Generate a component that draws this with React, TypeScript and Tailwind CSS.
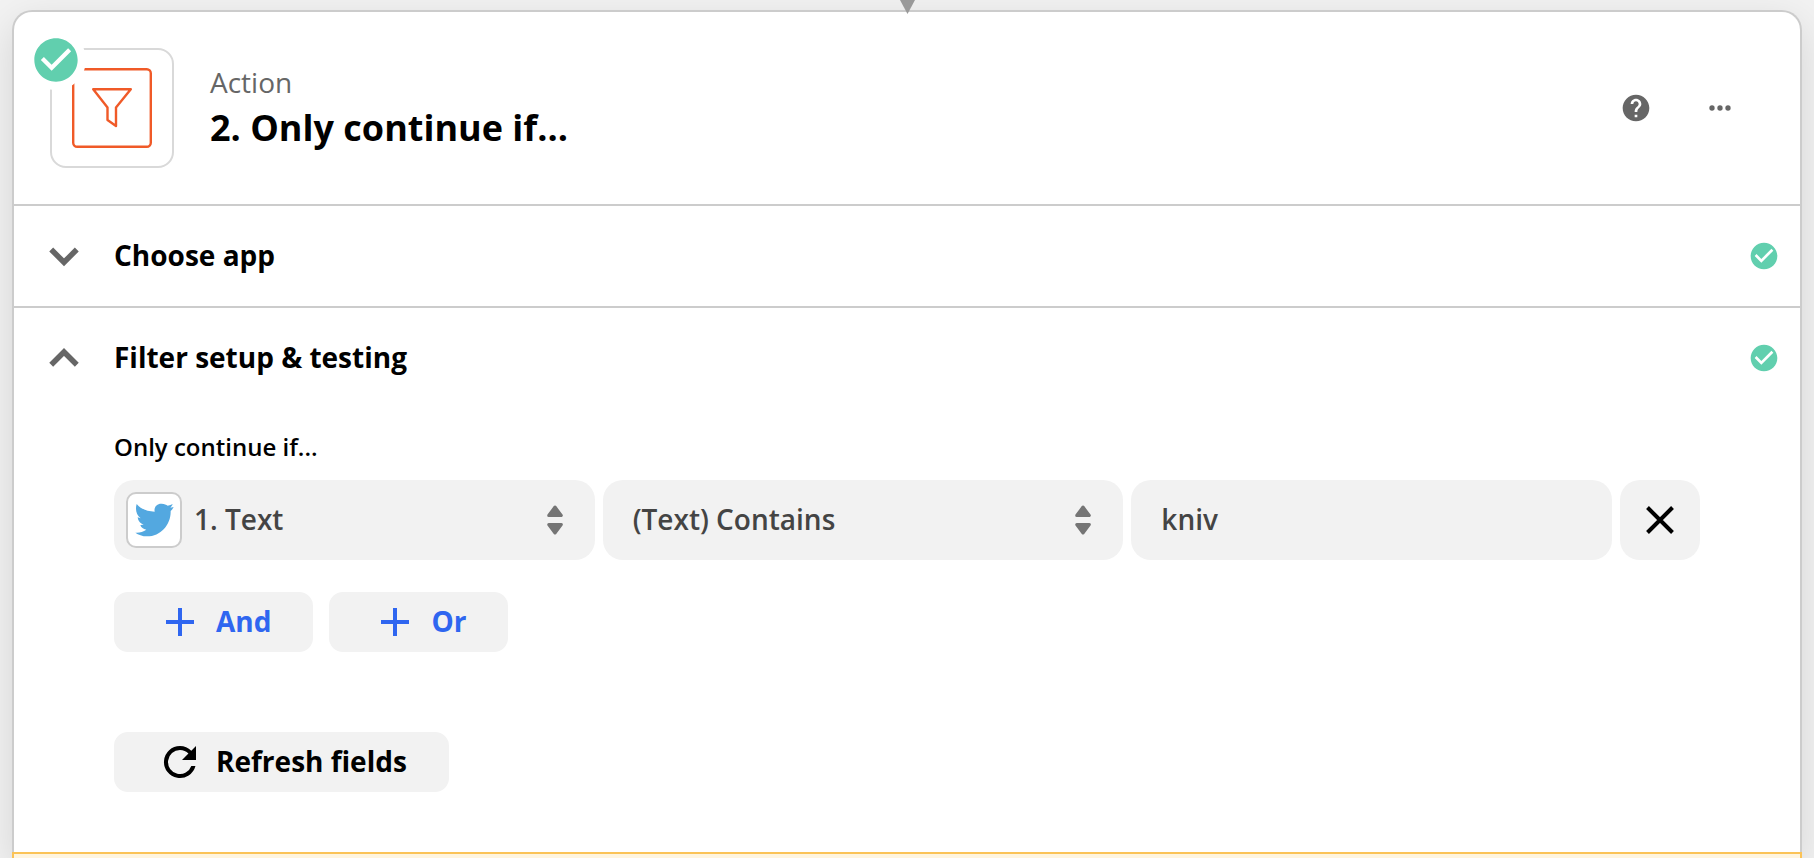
import { useState, type ReactNode } from 'react';

const PLUS_PATH = 'M19 13h-6v6h-2v-6H5v-2h6V5h2v6h6z';
const REFRESH_PATH =
  'M17.65 6.35A7.96 7.96 0 0 0 12 4a8 8 0 1 0 7.73 10h-2.08A6 6 0 1 1 12 6c1.66 0 3.14.69 4.22 1.78L13 11h7V4z';
const CHECK_PATH =
  'M12 2C6.48 2 2 6.48 2 12s4.48 10 10 10 10-4.48 10-10S17.52 2 12 2zm-2 15l-5-5 1.41-1.41L10 14.17l7.59-7.59L19 8z';

function CheckCircle({ className }: { className: string }) {
  return (
    <svg viewBox="0 0 24 24" className={className} fill="currentColor" aria-hidden="true">
      <path d={CHECK_PATH} />
    </svg>
  );
}

function TwitterBird() {
  return (
    <svg viewBox="44 48 117 114" className="w-[39px] h-[38px]" fill="#53a8e0" aria-hidden="true">
      <path d="M49 57C62 73 82 79 103 80C100 64 112 55 124 56C132 56 138 59 142 62C148 61 153 59 157 57C155 62 153 65 150 68L160 66C158 71 154 75 151 78C152 118 122 154 80 154C66 154 54 149 45 143C57 144 68 141 78 134C69 133 62 127 60 120L70 119C58 115 53 106 52 97L61 100C48 90 44 74 49 57Z" />
    </svg>
  );
}

function AppIcon() {
  return (
    <div className="relative w-[124px] h-[120px] shrink-0 flex items-center justify-center rounded-2xl border-2 border-[#d9d9d9]">
      <svg viewBox="0 0 80 80" className="w-20 h-20" fill="none" stroke="#f05a28" strokeWidth="2.4" strokeLinejoin="round" aria-hidden="true">
        <rect x="1.2" y="1.2" width="77.6" height="77.6" rx="4" />
        <path d="M21.2 21.2h37.6L44 39.5V58l-8.5-6V39.5z" />
      </svg>
      {/* Status badge */}
      <span className="absolute -top-5 -left-6.5 w-15 h-15 flex items-center justify-center rounded-full bg-white">
        <CheckCircle className="w-[52px] h-[52px] text-[#61cfae]" />
      </span>
    </div>
  );
}

interface SectionHeaderProps {
  title: string;
  open: boolean;
  onToggle: () => void;
}

function SectionHeader({ title, open, onToggle }: SectionHeaderProps) {
  return (
    <h3>
      <button
        type="button"
        onClick={onToggle}
        aria-expanded={open}
        className="w-full h-[100px] flex items-center gap-[34px] pl-[34px] pr-5 text-left text-[28px] font-bold text-black"
      >
        <svg viewBox="0 0 32 32" className="w-8 h-8 shrink-0" fill="none" stroke="#666" strokeWidth="5.5" aria-hidden="true">
          {open ? <path d="M3.2 22.8L16 10L28.8 22.8" /> : <path d="M3.2 9.5L16 22.3L28.8 9.5" />}
        </svg>
        <span className="flex-1 pb-0.5">{title}</span>
        <CheckCircle className="w-8 h-8 shrink-0 text-[#61cfae]" />
      </button>
    </h3>
  );
}

function SortArrows() {
  return (
    <svg
      viewBox="0 0 16 30"
      className="absolute right-8 top-1/2 -translate-y-1/2 w-4 h-[30px] pointer-events-none"
      fill="#757575"
      stroke="#757575"
      strokeWidth="3"
      strokeLinejoin="round"
      aria-hidden="true"
    >
      <path d="M8 2L14.3 10.5H1.7z" />
      <path d="M8 28L14.3 19.5H1.7z" />
    </svg>
  );
}

function ActionButton({ path, className, children }: { path: string; className: string; children: ReactNode }) {
  return (
    <button
      type="button"
      className={`h-[60px] flex items-center gap-3 px-10 rounded-[14px] border-2 border-[#f2f2f2] bg-[#f2f2f2] text-[28px] font-bold ${className}`}
    >
      <svg viewBox="0 0 24 24" className="w-12 h-12" fill="currentColor" aria-hidden="true">
        <path d={path} />
      </svg>
      <span className="pb-0.5">{children}</span>
    </button>
  );
}

export default function App() {
  const [chooseOpen, setChooseOpen] = useState(false);
  const [filterOpen, setFilterOpen] = useState(true);
  const [value, setValue] = useState('kniv');

  return (
    <main className="relative min-h-screen overflow-hidden bg-[#f2f2f2] px-3 pt-2.5 font-['Open_Sans',sans-serif]">
      <div className="rounded-t-[20px] shadow-[0_12px_40px_rgba(0,0,0,0.12)]">
        <section className="rounded-t-[20px] border-2 border-b-0 border-[#ccc] bg-white">
          {/* Header */}
          <header className="h-[194px] flex items-center gap-9 pl-9 pr-16 border-b-2 border-[#ccc]">
            <AppIcon />
            <div className="flex-1">
              <p className="text-[28px] leading-10 text-[#666]">Action</p>
              <h2 className="text-4xl leading-13 font-bold text-black">2. Only continue if...</h2>
            </div>
            <div className="flex items-center gap-[52px] text-[#666]">
              <button type="button" aria-label="Help">
                <svg viewBox="0 0 24 24" className="w-8 h-8" fill="currentColor" aria-hidden="true">
                  <path d="M12 2C6.48 2 2 6.48 2 12s4.48 10 10 10 10-4.48 10-10S17.52 2 12 2zm1 17h-2v-2h2v2zm2.07-7.75l-.9.92C13.45 12.9 13 13.5 13 15h-2v-.5c0-1.1.45-2.1 1.17-2.83l1.24-1.26c.37-.36.59-.86.59-1.41 0-1.1-.9-2-2-2s-2 .9-2 2H8c0-2.21 1.79-4 4-4s4 1.79 4 4c0 .88-.36 1.68-.93 2.25z" />
                </svg>
              </button>
              <button type="button" aria-label="More options">
                <svg viewBox="0 0 24 24" className="w-8 h-8" fill="currentColor" aria-hidden="true">
                  <circle cx="6" cy="12" r="2" />
                  <circle cx="12" cy="12" r="2" />
                  <circle cx="18" cy="12" r="2" />
                </svg>
              </button>
            </div>
          </header>

          <div className="border-b-2 border-[#ccc]">
            <SectionHeader title="Choose app" open={chooseOpen} onToggle={() => setChooseOpen(!chooseOpen)} />
          </div>

          <SectionHeader title="Filter setup & testing" open={filterOpen} onToggle={() => setFilterOpen(!filterOpen)} />

          {filterOpen && (
            <div className="px-[100px] pt-5 pb-15">
              <p className="mb-3.5 text-2xl leading-[38px] font-semibold text-black">Only continue if...</p>

              {/* Condition row */}
              <div className="flex gap-2 text-[28px] font-semibold text-[#444]">
                <div className="relative flex-[12] min-w-0">
                  <select aria-label="Field" className="w-full h-20 appearance-none rounded-[20px] bg-[#f2f2f2] pl-20 pr-14 pb-0.5">
                    <option>1. Text</option>
                  </select>
                  <span className="absolute left-3 top-3 w-14 h-14 flex items-center justify-center rounded-[10px] border-2 border-[#ccc] bg-white pointer-events-none">
                    <TwitterBird />
                  </span>
                  <SortArrows />
                </div>
                <div className="relative flex-[13] min-w-0">
                  <select aria-label="Condition" className="w-full h-20 appearance-none rounded-[20px] bg-[#f2f2f2] pl-[30px] pr-14 pb-0.5">
                    <option>(Text) Contains</option>
                  </select>
                  <SortArrows />
                </div>
                <div className="flex-[12] min-w-0">
                  <input
                    type="text"
                    aria-label="Value"
                    value={value}
                    onChange={(e) => setValue(e.target.value)}
                    className="w-full h-20 rounded-[20px] bg-[#f2f2f2] px-[30px] pb-0.5"
                  />
                </div>
                <button type="button" aria-label="Remove condition" className="w-20 h-20 shrink-0 flex items-center justify-center rounded-[20px] bg-[#f2f2f2]">
                  <svg viewBox="0 0 28 28" className="w-7 h-7" fill="none" stroke="#000" strokeWidth="4" aria-hidden="true">
                    <path d="M1.5 1.5L26.5 26.5M26.5 1.5L1.5 26.5" />
                  </svg>
                </button>
              </div>

              <div className="flex gap-4 mt-8">
                <ActionButton path={PLUS_PATH} className="text-[#2f66f0]">And</ActionButton>
                <ActionButton path={PLUS_PATH} className="text-[#2f66f0]">Or</ActionButton>
              </div>

              <div className="flex mt-20">
                <ActionButton path={REFRESH_PATH} className="text-black">Refresh fields</ActionButton>
              </div>
            </div>
          )}
        </section>

        {/* Notice panel */}
        <div className="h-1.5 border-2 border-b-0 border-[#fbc356] bg-[#fff5de]" />
      </div>

      {/* Connector from the previous step */}
      <svg viewBox="0 0 16 14" className="absolute top-0 left-1/2 -translate-x-1/2 w-4 h-3.5" fill="#999" aria-hidden="true">
        <path d="M1 0h15L8.5 14z" />
      </svg>
    </main>
  );
}
